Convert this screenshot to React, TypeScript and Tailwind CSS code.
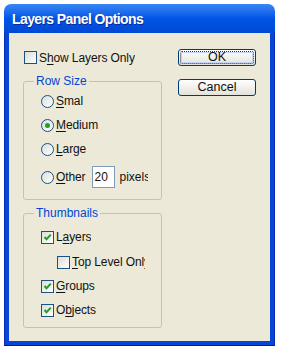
import React from 'react';

const font = { fontFamily: '"Liberation Sans", Arial, sans-serif' };

function Check({ checked }: { checked?: boolean }) {
  return (
    <span className="relative w-[13px] h-[13px] shrink-0 border border-[#1C5180] bg-gradient-to-br from-[#DCDCD7] to-white">
      {checked && (
        <svg className="absolute inset-0" width="11" height="11" viewBox="0 0 11 11">
          <path d="M2.5 5 L4.5 7.2 L8.8 2.6" fill="none" stroke="#21A121" strokeWidth="2" />
        </svg>
      )}
    </span>
  );
}

function Radio({ checked }: { checked?: boolean }) {
  return (
    <span className="relative w-[13px] h-[13px] shrink-0 rounded-full border border-[#1C5180] bg-gradient-to-br from-[#DCDCD7] to-white flex items-center justify-center">
      {checked && <span className="w-[5px] h-[5px] rounded-full bg-[#21A121]" />}
    </span>
  );
}

function Label({ pre = '', u, post, w }: { pre?: string; u: string; post: string; w?: string }) {
  return (
    <span className={`shrink-0 whitespace-nowrap overflow-hidden text-[12px] tracking-[-0.1px] leading-[16px] text-[#111] ${w ?? ''}`}>
      {pre}
      <span className="underline underline-offset-2">{u}</span>
      {post}
    </span>
  );
}

function Button({ children, primary }: { children: React.ReactNode; primary?: boolean }) {
  return (
    <div className="w-[78px] h-[17px] rounded-[3px] border border-[#003C74] bg-gradient-to-b from-white to-[#E3E2DA] p-[1px]">
      <div
        className={`h-full flex items-center justify-center text-[12.5px] leading-none text-[#111] ${
          primary ? 'border border-dotted border-[#333] rounded-[2px] shadow-[inset_0_0_0_1px_#C5D3F6]' : ''
        }`}
      >
        {children}
      </div>
    </div>
  );
}

export default function App() {
  return (
    <div className="w-[281px] h-[353px] bg-white pt-[4px] pl-[4px]" style={font}>
      <div className="w-[271px] h-[342px] flex flex-col rounded-t-[7px] overflow-hidden">
        <div className="h-[29px] shrink-0 bg-gradient-to-b from-[#3A86F5] via-[#0055E6] to-[#0049D4] flex items-center pl-[8px] pt-[2px]">
          <span className="text-white font-bold text-[14px] tracking-[-0.6px] [text-shadow:1px_1px_0_#0A2A9A]">
            Layers Panel Options
          </span>
        </div>
        <div className="flex-1 bg-[#0646D6] px-[4px] pb-[4px] border-b border-[#001A8C] border-x border-x-[#0A2AB8]">
          <div className="h-full bg-[#ECE9D8] flex pl-[14px] pr-[14px] pt-[17px]">
            <div className="w-[139px] shrink-0 flex flex-col">
              <div className="flex items-center gap-[2px] h-[15px] pl-[1px]">
                <Check />
                <Label pre="S" u="h" post="ow Layers Only" />
              </div>

              <fieldset className="min-w-0 w-[139px] mt-[9px] border border-[#C5C2B2] rounded-[3px] px-[17px] pt-[4px] pb-[11px]">
                <legend className="-ml-[7px] px-[2px] text-[12px] leading-[15px] text-[#0046D5]">Row Size</legend>
                <div className="flex flex-col gap-[8px]">
                  <div className="flex items-center gap-[2px] h-[16px]">
                    <Radio />
                    <Label u="S" post="mal" />
                  </div>
                  <div className="flex items-center gap-[2px] h-[16px]">
                    <Radio checked />
                    <Label u="M" post="edium" w="w-[44px]" />
                  </div>
                  <div className="flex items-center gap-[2px] h-[16px]">
                    <Radio />
                    <Label u="L" post="arge" />
                  </div>
                  <div className="flex items-center gap-[2px] h-[22px] mt-[1px]">
                    <Radio />
                    <Label u="O" post="ther" />
                    <span className="ml-[4px] w-[23px] h-[22px] shrink-0 border border-[#7F9DB9] bg-white text-[12px] leading-[20px] pl-[2px] text-[#111]">
                      20
                    </span>
                    <span className="ml-[3px] shrink-0 w-[28px] overflow-hidden whitespace-nowrap text-[12px] leading-[16px] text-[#111]">
                      pixels
                    </span>
                  </div>
                </div>
              </fieldset>

              <fieldset className="min-w-0 w-[139px] mt-[6px] border border-[#C5C2B2] rounded-[3px] px-[17px] pt-[8px] pb-[9px]">
                <legend className="-ml-[7px] px-[2px] text-[12px] leading-[15px] text-[#0046D5]">Thumbnails</legend>
                <div className="flex flex-col gap-[8px]">
                  <div className="flex items-center gap-[2px] h-[16px]">
                    <Check checked />
                    <Label pre="L" u="a" post="yers" />
                  </div>
                  <div className="flex items-center gap-[2px] h-[16px] pl-[16px] mt-[1px]">
                    <Check />
                    <Label u="T" post="op Level Only" w="w-[73px]" />
                  </div>
                  <div className="flex items-center gap-[2px] h-[16px]">
                    <Check checked />
                    <Label u="G" post="roups" />
                  </div>
                  <div className="flex items-center gap-[2px] h-[16px]">
                    <Check checked />
                    <Label pre="O" u="b" post="jects" w="w-[42px]" />
                  </div>
                </div>
              </fieldset>
            </div>

            <div className="ml-auto flex flex-col gap-[13px] -mt-[1px]">
              <Button primary>OK</Button>
              <Button>Cancel</Button>
            </div>
          </div>
        </div>
      </div>
    </div>
  );
}
